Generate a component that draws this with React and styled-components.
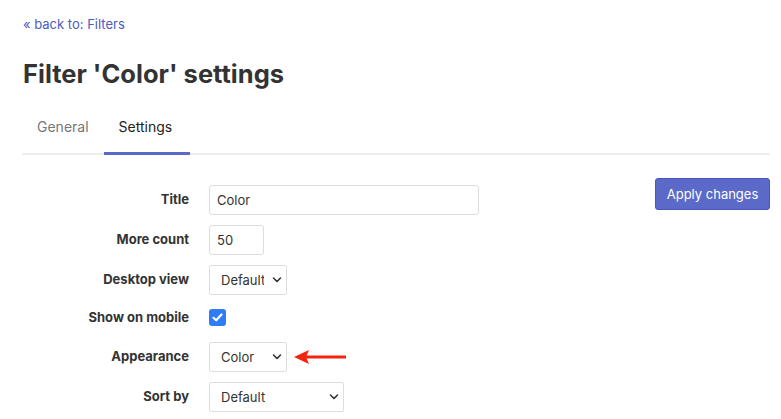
import React from "react";
import styled, { createGlobalStyle } from "styled-components";

const Global = createGlobalStyle`
  html, body { margin: 0; padding: 0; background: #fff; }
  body { font-family: Inter, "Noto Sans", sans-serif; color: #333; }
  * { box-sizing: border-box; }
`;

const Page = styled.div`
  padding: 16px 11px 0 23px;
  width: 781px;
`;

const BackLink = styled.a`
  display: block;
  font-size: 13px;
  line-height: 16px;
  color: #4a5bc4;
  text-decoration: none;
`;

const Heading = styled.h1`
  margin: 27px 0 0;
  font-size: 25.5px;
  line-height: 30px;
  font-weight: 700;
  color: #333;
`;

const Tabs = styled.div`
  display: flex;
  margin-top: 24px;
  margin-left: -1px;
  border-bottom: 2px solid #ededed;
`;

const Tab = styled.div`
  padding: ${p => (p.$active ? "0 18px 0 15px" : "0 15px")};
  height: 42px;
  line-height: 28px;
  font-size: 14px;
  color: ${p => (p.$active ? "#222" : "#777")};
  margin-bottom: -2px;
  border-bottom: 3px solid ${p => (p.$active ? "#5b6ac9" : "transparent")};
`;

const Body = styled.div`
  display: flex;
  justify-content: space-between;
  align-items: flex-start;
  margin-top: 23px;
`;

const Form = styled.div`
  display: flex;
  flex-direction: column;
  gap: 10px;
  padding-top: 7px;
`;

const Row = styled.div`
  display: flex;
  align-items: center;
  min-height: ${p => p.$h || 30}px;
`;

const Label = styled.div`
  width: 166px;
  text-align: right;
  margin-right: 20px;
  font-size: 13px;
  font-weight: 700;
  color: #333;
  margin-top: -3px;
`;

const TextInput = styled.input`
  width: ${p => p.$w}px;
  height: 30px;
  border: 1px solid #ddd;
  border-radius: 3px;
  padding: 0 7px;
  font-family: inherit;
  font-size: 13px;
  color: #333;
  outline: none;
`;

const SelectWrap = styled.div`
  position: relative;
  width: ${p => p.$w}px;
  height: 30px;
`;

const Select = styled.select`
  appearance: none;
  -webkit-appearance: none;
  width: 100%;
  height: 100%;
  border: 1px solid #ddd;
  border-radius: 2px;
  background: #fff;
  padding: 0 22px 0 11px;
  font-family: inherit;
  font-size: 13px;
  color: #333;
  outline: none;
`;

const Chevron = styled.svg`
  position: absolute;
  right: 5px;
  top: 11px;
  pointer-events: none;
`;

const Check = styled.div`
  width: 17px;
  height: 17px;
  border-radius: 3px;
  background: #2f7cf6;
  display: flex;
  align-items: center;
  justify-content: center;
  margin-top: -3px;
`;

const Arrow = styled.svg`
  margin-left: 7px;
`;

const Button = styled.button`
  width: 115px;
  height: 32px;
  padding: 0;
  background: #5b6ac9;
  border: 1px solid #4756b8;
  border-radius: 3px;
  color: #fff;
  font-family: inherit;
  font-size: 13px;
`;

function Dropdown({ w, value }) {
  return (
    <SelectWrap $w={w}>
      <Select defaultValue={value}>
        <option>{value}</option>
      </Select>
      <Chevron width="10" height="8" viewBox="0 0 10 8">
        <path d="M1.5 2 L5 5.5 L8.5 2" fill="none" stroke="#333" strokeWidth="1.6" strokeLinecap="round" strokeLinejoin="round" />
      </Chevron>
    </SelectWrap>
  );
}

export default function App() {
  return (
    <>
      <Global />
      <Page>
        <BackLink href="#">« back to: Filters</BackLink>
        <Heading>Filter 'Color' settings</Heading>
        <Tabs>
          <Tab>General</Tab>
          <Tab $active>Settings</Tab>
        </Tabs>
        <Body>
          <Form>
            <Row>
              <Label>Title</Label>
              <TextInput $w={270} defaultValue="Color" />
            </Row>
            <Row>
              <Label>More count</Label>
              <TextInput $w={55} defaultValue="50" />
            </Row>
            <Row>
              <Label>Desktop view</Label>
              <Dropdown w={78} value="Default" />
            </Row>
            <Row $h={27}>
              <Label>Show on mobile</Label>
              <Check>
                <svg width="11" height="9" viewBox="0 0 11 9">
                  <path d="M1.5 4.8 L4.2 7.3 L9.5 1.5" fill="none" stroke="#fff" strokeWidth="2.2" strokeLinecap="round" strokeLinejoin="round" />
                </svg>
              </Check>
            </Row>
            <Row>
              <Label>Appearance</Label>
              <Dropdown w={78} value="Color" />
              <Arrow width="52" height="16" viewBox="0 0 52 16">
                <path d="M12 6.5 H52 V9.5 H12 Z" fill="#f4250e" />
                <path d="M0 8 L15 1 L12 8 L15 15 Z" fill="#f4250e" />
              </Arrow>
            </Row>
            <Row>
              <Label>Sort by</Label>
              <Dropdown w={135} value="Default" />
            </Row>
          </Form>
          <Button>Apply changes</Button>
        </Body>
      </Page>
    </>
  );
}
